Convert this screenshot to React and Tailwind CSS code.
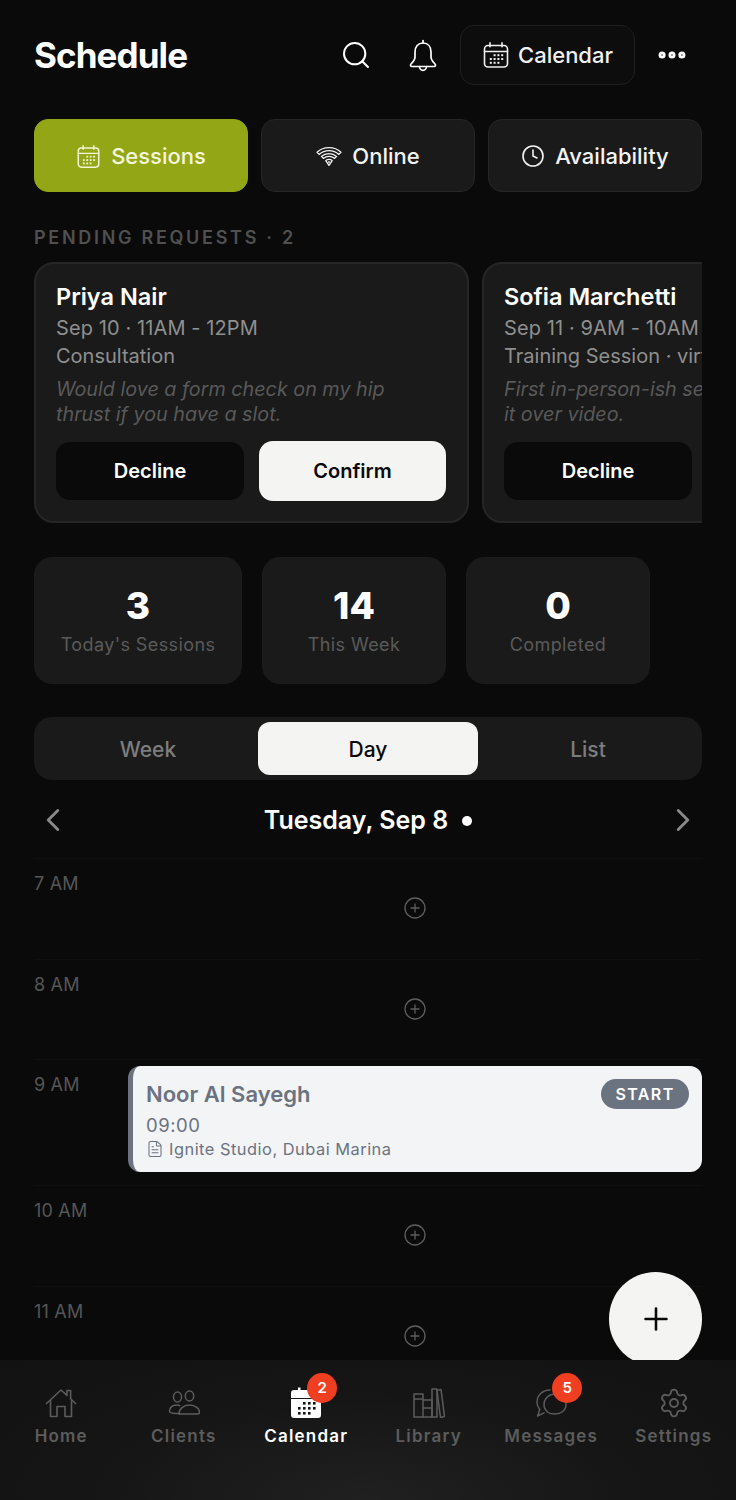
import React from 'react';
import { Search, Clock, ChevronLeft, ChevronRight, Plus, CirclePlus, Settings, FileText, MoreHorizontal } from 'lucide-react';

function CalendarIcon({ size = 28, className = '' }) {
  return (
    <svg width={size} height={size} viewBox="0 0 28 28" fill="none" stroke="currentColor" strokeWidth="1.6" strokeLinecap="round" className={className}>
      <rect x="2.5" y="4.5" width="23" height="21.5" rx="3.5" />
      <path d="M2.5 10.5h23M8 1.8v4M20 1.8v4" />
      <g stroke="none" fill="currentColor">
        <rect x="11.6" y="13.2" width="2" height="2" />
        <rect x="15.4" y="13.2" width="2" height="2" />
        <rect x="19.2" y="13.2" width="2" height="2" />
        <rect x="7.8" y="17" width="2" height="2" />
        <rect x="11.6" y="17" width="2" height="2" />
        <rect x="15.4" y="17" width="2" height="2" />
        <rect x="19.2" y="17" width="2" height="2" />
        <rect x="7.8" y="20.8" width="2" height="2" />
        <rect x="11.6" y="20.8" width="2" height="2" />
        <rect x="15.4" y="20.8" width="2" height="2" />
      </g>
    </svg>
  );
}

function BellIcon() {
  return (
    <svg width="28" height="33" viewBox="0 0 28 33" fill="none" stroke="currentColor" strokeWidth="1.7" strokeLinecap="round" strokeLinejoin="round" className="text-white">
      <path d="M14 4c-5 0-8 3.500-8 9v5c0 3-2 5-4 7-1 1-.5 2.500 1 2.500h22c1.500 0 2-1.500 1-2.500-2-2-4-4-4-7v-5c0-5.500-3-9-8-9Z" />
      <path d="M14 4V1.500" />
      <path d="M10.500 27.500c0 2 1.500 3.800 3.500 3.800s3.500-1.800 3.500-3.800" />
    </svg>
  );
}

function WifiIcon() {
  return (
    <svg width="26" height="22" viewBox="0 0 26 22" fill="none" stroke="currentColor" strokeWidth="1.3" strokeLinecap="round" strokeLinejoin="round">
      <path d="M1 7.200C7.600 1 18.400 1 25 7.200L22.800 9.400C17.400 4.400 8.600 4.400 3.200 9.400Z" />
      <path d="M5.400 11.400C9.600 7.600 16.400 7.600 20.600 11.400L18.600 13.400C15.400 10.600 10.600 10.600 7.400 13.400Z" />
      <path d="M9.800 15.600C11.600 14.200 14.400 14.200 16.200 15.600L13 20.400Z" />
      <circle cx="13" cy="17" r="0.9" fill="currentColor" stroke="none" />
    </svg>
  );
}

function HomeIcon() {
  return (
    <svg width="32" height="30" viewBox="0 0 32 30" fill="none" stroke="currentColor" strokeWidth="1.6" strokeLinejoin="round" strokeLinecap="round">
      <path d="M1.500 15.500 16 2l6 5.400V2.500h3.600v8.200l4.900 4.800" />
      <path d="M5.500 12.500V28.500H12V18.500h8V28.500h6.500V12.500" />
    </svg>
  );
}

function ClientsIcon() {
  return (
    <svg width="32" height="26" viewBox="0 0 32 26" fill="none" stroke="currentColor" strokeWidth="1.5">
      <ellipse cx="9.500" cy="7" rx="4" ry="5" />
      <ellipse cx="21.500" cy="6" rx="4.200" ry="5" />
      <path d="M1.500 21c0-3.500 3-6 7-6 1.500 0 2.800.3 3.800.9" />
      <path d="M1.500 21c0 1.500 2 2.400 6 2.400h4.500" />
      <path d="M11 24c0-5 4.500-9 10.500-9S31.500 19 31.500 22c0 1-.8 2-2 2Z" />
    </svg>
  );
}

function LibraryIcon() {
  return (
    <svg width="32" height="30" viewBox="0 0 32 30" fill="none" stroke="currentColor" strokeWidth="1.5" strokeLinejoin="round">
      <rect x="1" y="6" width="9" height="23" />
      <path d="M1 11h9M10 12h9v17h-9M10 20h9" />
      <rect x="19" y="1" width="5" height="28" />
      <path d="M24 2.500 28 1.500 31.500 28.500 27.500 29.500Z" />
    </svg>
  );
}

function MessagesIcon() {
  return (
    <svg width="32" height="32" viewBox="0 0 32 32" fill="none" stroke="currentColor" strokeWidth="1.5" strokeLinejoin="round" strokeLinecap="round">
      <path d="M15 3C7.500 3 2 8.500 2 15c0 3 1 5.500 2.800 7.600L2.500 29l6.500-3.200" />
      <path d="M9 17.500C9 11.500 14 7 20 7s11 4.500 11 10.500S26 27 20 27c-3.500 0-5.500-.5-7-1.500C10.500 23.500 9 21 9 17.500Z" />
    </svg>
  );
}

function Badge({ value }) {
  return (
    <span className="absolute -top-[14px] left-[17px] flex h-[30px] w-[30px] items-center justify-center rounded-full bg-[#f03e21] text-[15px] font-semibold text-white">
      {value}
    </span>
  );
}

function NavItem({ label, active, children, badge }) {
  return (
    <div className={`flex w-[122.5px] flex-col items-center ${active ? 'text-white' : 'text-[#5c5c5c]'}`}>
      <div className="relative flex h-[32px] w-[32px] items-center justify-center">
        {children}
        {badge && <Badge value={badge} />}
      </div>
      <span className="mt-[5px] text-[17px] font-semibold leading-[24px] tracking-[1.2px]">{label}</span>
    </div>
  );
}

function TopTab({ label, icon, active }) {
  return (
    <div className={`flex h-[73px] w-[214px] items-center justify-center gap-[10px] rounded-[14px] border pt-[1px] text-[22px] font-medium ${active ? 'border-[#93a616] bg-[#93a616] text-[#f4f5dc]' : 'border-[#262626] bg-[#1a1a1a] text-[#f3f3f3]'}`}>
      {icon}
      <span>{label}</span>
    </div>
  );
}

function RequestCard({ name, when, type, note, showConfirm }) {
  return (
    <div className="h-[261px] w-[435px] shrink-0 rounded-[20px] border-2 border-[#262626] bg-[#1a1a1a] px-[20px] pt-[18px]">
      <div className="overflow-hidden whitespace-nowrap text-[23.5px] font-semibold leading-[30px] text-white">{name}</div>
      <div className="mt-[3px] overflow-hidden whitespace-nowrap text-[20px] leading-[27px] tracking-[0.1px] text-[#8f8f8f]">{when}</div>
      <div className="mt-[1px] overflow-hidden whitespace-nowrap text-[20px] leading-[27px] text-[#8f8f8f]">{type}</div>
      <div className="mt-[7px] h-[50px] max-w-[345px] text-[19.75px] italic leading-[25px] text-[#595959]">{note}</div>
      <div className="mt-[14px] flex h-[60px] items-center gap-[15px]">
        <button className="h-[58px] w-[188px] shrink-0 rounded-[14px] bg-[#0a0a0a] text-[20px] font-semibold text-white">Decline</button>
        {showConfirm && <button className="h-[60px] w-[187px] rounded-[14px] bg-[#f4f4f2] text-[20px] font-semibold text-[#0a0a0a]">Confirm</button>}
      </div>
    </div>
  );
}

function Stat({ value, label, width }) {
  return (
    <div className={`flex h-[127px] ${width} flex-col items-center justify-center rounded-[18px] border border-[#1c1c1c] bg-[#1a1a1a]`}>
      <span className="text-[37px] font-extrabold leading-[44px] text-white">{value}</span>
      <span className="mt-[4px] text-[18px] leading-[26px] tracking-[0.4px] text-[#5a5a5a]">{label}</span>
    </div>
  );
}

function HourRow({ label }) {
  return (
    <div className="flex h-[100.5px] border-t border-[#0f0f0f]">
      <span className="mt-[14px] w-[94px] shrink-0 text-[18px] leading-[22px] tracking-[0.2px] text-[#565656]">{label}</span>
      <div className="flex flex-1 justify-center pt-[37px]">
        <CirclePlus size={24} strokeWidth={1.3} className="text-[#5e5e5e]" />
      </div>
    </div>
  );
}

export default function App() {
  return (
    <div className="flex h-[1500px] w-[736px] flex-col overflow-hidden bg-[#0a0a0a] font-['Inter',sans-serif]">
      <div className="relative h-[1360px] shrink-0 overflow-hidden">
        {/* header */}
        <div className="mt-[25px] flex h-[60px] items-center pl-[34px]">
          <h1 className="w-[291px] text-[35px] font-bold tracking-[-0.9px] text-white">Schedule</h1>
          <Search size={32} strokeWidth={1.5} className="ml-[15px] text-white" />
          <div className="ml-[37px]"><BellIcon /></div>
          <div className="ml-[23px] flex h-[60px] w-[175px] items-center justify-center gap-[8px] rounded-[14px] border border-[#1f1f1f] bg-[#0d0d0d] text-[22px] font-medium text-[#f0f0f0]">
            <CalendarIcon />
            <span>Calendar</span>
          </div>
          <MoreHorizontal size={34} strokeWidth={3} className="ml-[20px] text-white" />
        </div>

        {/* tabs */}
        <div className="mx-[34px] mt-[34px] flex justify-between">
          <TopTab active label="Sessions" icon={<CalendarIcon size={25} />} />
          <TopTab label="Online" icon={<WifiIcon />} />
          <TopTab label="Availability" icon={<Clock size={24} strokeWidth={1.6} />} />
        </div>

        {/* pending requests */}
        <div className="mx-[34px] mt-[35px] text-[18px] font-semibold leading-[22px] tracking-[2.7px] text-[#505050]">PENDING REQUESTS · 2</div>
        <div className="ml-[34px] mt-[13px] flex w-[668px] gap-[13px] overflow-hidden">
          <RequestCard name="Priya Nair" when="Sep 10 · 11AM - 12PM" type="Consultation" note="Would love a form check on my hip thrust if you have a slot." showConfirm />
          <RequestCard name="Sofia Marchetti" when="Sep 11 · 9AM - 10AM" type="Training Session · virtual" note={<>First in-person-ish session,<br />it over video.</>} />
        </div>

        {/* stats */}
        <div className="mx-[34px] mt-[34px] flex gap-[20px]">
          <Stat value="3" label="Today's Sessions" width="w-[208px]" />
          <Stat value="14" label="This Week" width="w-[184px]" />
          <Stat value="0" label="Completed" width="w-[184px]" />
        </div>

        {/* view switch */}
        <div className="mx-[34px] mt-[33px] flex h-[63px] items-center rounded-[18px] bg-[#1a1a1a] px-[4px] text-[21px] font-medium">
          <div className="flex-1 pt-[2px] text-center text-[#7d7d7d]">Week</div>
          <div className="flex h-[53px] w-[220px] items-center justify-center rounded-[12px] bg-[#f4f4f2] pt-[2px] text-[#0a0a0a]">Day</div>
          <div className="flex-1 pt-[2px] text-center text-[#7d7d7d]">List</div>
        </div>

        {/* date row */}
        <div className="mx-[34px] mt-[20px] flex h-[40px] items-center justify-between">
          <ChevronLeft size={38} strokeWidth={1.8} className="text-[#8a8a8a]" />
          <div className="flex items-center gap-[14px] pt-[1px] text-[25px] font-semibold text-white">
            <span>Tuesday, Sep 8</span>
            <span className="h-[10px] w-[10px] rounded-full bg-white" />
          </div>
          <ChevronRight size={38} strokeWidth={1.8} className="text-[#8a8a8a]" />
        </div>

        {/* hours */}
        <div className="mx-[34px] mt-[18px]">
          <HourRow label="7 AM" />
          <HourRow label="8 AM" />
          <div className="flex h-[126px] border-t border-[#0f0f0f]">
            <span className="mt-[14px] w-[94px] shrink-0 text-[18px] leading-[22px] tracking-[0.2px] text-[#565656]">9 AM</span>
            <div className="mt-[6px] h-[106px] flex-1 rounded-[12px] border-l-[5px] border-[#6b7280] bg-[#f3f4f6] pl-[13px] pr-[14px] pt-[13px]">
              <div className="flex items-start justify-between">
                <span className="text-[22px] font-semibold leading-[30px] text-[#6b7280]">Noor Al Sayegh</span>
                <span className="-mr-[1px] flex h-[30px] w-[88px] items-center justify-center rounded-full bg-[#6b7280] text-[16px] font-semibold tracking-[1.4px] text-white">START</span>
              </div>
              <div className="mt-[3px] text-[18.5px] leading-[26px] tracking-[0.5px] text-[#6b7280]">09:00</div>
              <div className="flex items-center gap-[5px] text-[16.4px] leading-[22px] tracking-[0.5px] text-[#6b7280]">
                <FileText size={18} strokeWidth={1.4} />
                <span>Ignite Studio, Dubai Marina</span>
              </div>
            </div>
          </div>
          <HourRow label="10 AM" />
          <HourRow label="11 AM" />
        </div>

        {/* fab */}
        <div className="absolute left-[609px] top-[1272px] flex h-[94px] w-[93px] items-center justify-center rounded-full bg-[#f4f4f2] text-[#0a0a0a]">
          <Plus size={36} strokeWidth={1.7} />
        </div>
      </div>

      {/* bottom nav */}
      <div className="flex h-[140px] shrink-0 bg-[radial-gradient(ellipse_at_50%_100%,#202020_0%,#151515_55%,#121212_100%)] pt-[27px]">
        <NavItem label="Home"><HomeIcon /></NavItem>
        <NavItem label="Clients"><ClientsIcon /></NavItem>
        <NavItem label="Calendar" active badge="2">
          <svg width="32" height="32" viewBox="0 0 32 32">
            <path d="M4 3h24a3 3 0 0 1 3 3v5H1V6a3 3 0 0 1 3-3ZM1 12h30v16a3 3 0 0 1-3 3H4a3 3 0 0 1-3-3Z" fill="#fff" />
            <rect x="8" y="0.500" width="2.500" height="4" fill="#fff" />
            <g fill="#161616">
              <rect x="13" y="15" width="2.600" height="2.600" /><rect x="18" y="15" width="2.600" height="2.600" /><rect x="23" y="15" width="2.600" height="2.600" />
              <rect x="8" y="20" width="2.600" height="2.600" /><rect x="13" y="20" width="2.600" height="2.600" /><rect x="18" y="20" width="2.600" height="2.600" /><rect x="23" y="20" width="2.600" height="2.600" />
              <rect x="8" y="25" width="2.600" height="2.600" /><rect x="13" y="25" width="2.600" height="2.600" /><rect x="18" y="25" width="2.600" height="2.600" />
            </g>
          </svg>
        </NavItem>
        <NavItem label="Library"><LibraryIcon /></NavItem>
        <NavItem label="Messages" badge="5"><MessagesIcon /></NavItem>
        <NavItem label="Settings"><Settings size={32} strokeWidth={1.4} /></NavItem>
      </div>
    </div>
  );
}
